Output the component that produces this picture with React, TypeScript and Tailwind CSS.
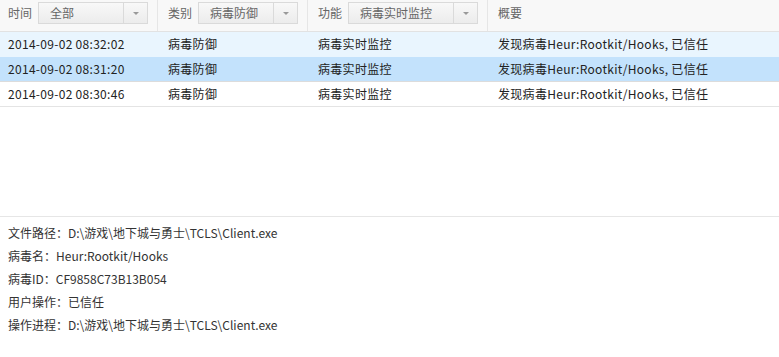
import React from "react";

const rows = [
  { time: "2014-09-02 08:32:02", bg: "bg-[#e9f5fe]", border: "border-[#e9f5fe]" },
  { time: "2014-09-02 08:31:20", bg: "bg-[#c3e2fc]", border: "border-[#dcdcdc]" },
  { time: "2014-09-02 08:30:46", bg: "bg-white", border: "border-[#e4e4e4]" },
];

const details = [
  "文件路径：D:\\游戏\\地下城与勇士\\TCLS\\Client.exe",
  "病毒名：Heur:Rootkit/Hooks",
  "病毒ID：CF9858C73B13B054",
  "用户操作：已信任",
  "操作进程：D:\\游戏\\地下城与勇士\\TCLS\\Client.exe",
];

const Select = ({ value, width }: { value: string; width: string }) => (
  <div
    className={`ml-[6px] flex h-[22px] ${width} items-stretch border border-[#dadada] bg-gradient-to-b from-[#f8f8f8] to-[#ececec]`}
  >
    <div className="flex flex-1 items-center pl-[11px] text-[#666]">{value}</div>
    <div className="flex w-[24px] items-center justify-center border-l border-[#dadada]">
      <span className="h-0 w-0 border-x-[3.5px] border-t-[3.5px] border-x-transparent border-t-[#999]" />
    </div>
  </div>
);

export default function App() {
  return (
    <div
      className="h-[357px] w-[779px] overflow-hidden bg-white text-[12px] text-[#222]"
      style={{ fontFamily: '"Noto Sans CJK SC", "Noto Sans", sans-serif' }}
    >
      <div className="h-[216px]">
        <div className="flex h-[32px] border-b border-[#e2e2e2] bg-[#f8f8f8]">
          <div className="flex w-[158px] items-start border-r border-[#e6e6e6] pl-2 pt-[2px]">
            <span className="leading-[22px] text-[#666]">时间</span>
            <Select value="全部" width="w-[110px]" />
          </div>
          <div className="flex w-[150px] items-start border-r border-[#e6e6e6] pl-[10px] pt-[2px]">
            <span className="leading-[22px] text-[#666]">类别</span>
            <Select value="病毒防御" width="w-[100px]" />
          </div>
          <div className="flex w-[180px] items-start border-r border-[#e6e6e6] pl-[10px] pt-[2px]">
            <span className="leading-[22px] text-[#666]">功能</span>
            <Select value="病毒实时监控" width="w-[130px]" />
          </div>
          <div className="flex flex-1 items-start pl-[10px] pt-[2px]">
            <span className="leading-[22px] text-[#666]">概要</span>
          </div>
        </div>
        {rows.map((r) => (
          <div
            key={r.time}
            className={`flex h-[25px] items-center border-b tracking-[0.3px] ${r.bg} ${r.border}`}
          >
            <div className="w-[158px] pl-2">{r.time}</div>
            <div className="w-[150px] pl-[10px]">病毒防御</div>
            <div className="w-[180px] pl-[10px]">病毒实时监控</div>
            <div className="flex-1 pl-[10px]">发现病毒Heur:Rootkit/Hooks, 已信任</div>
          </div>
        ))}
      </div>
      <div className="border-t border-[#e6e6e6] pl-2 pt-[4px] text-[#333]">
        {details.map((d) => (
          <div key={d} className="leading-[23px]">
            {d}
          </div>
        ))}
      </div>
    </div>
  );
}
